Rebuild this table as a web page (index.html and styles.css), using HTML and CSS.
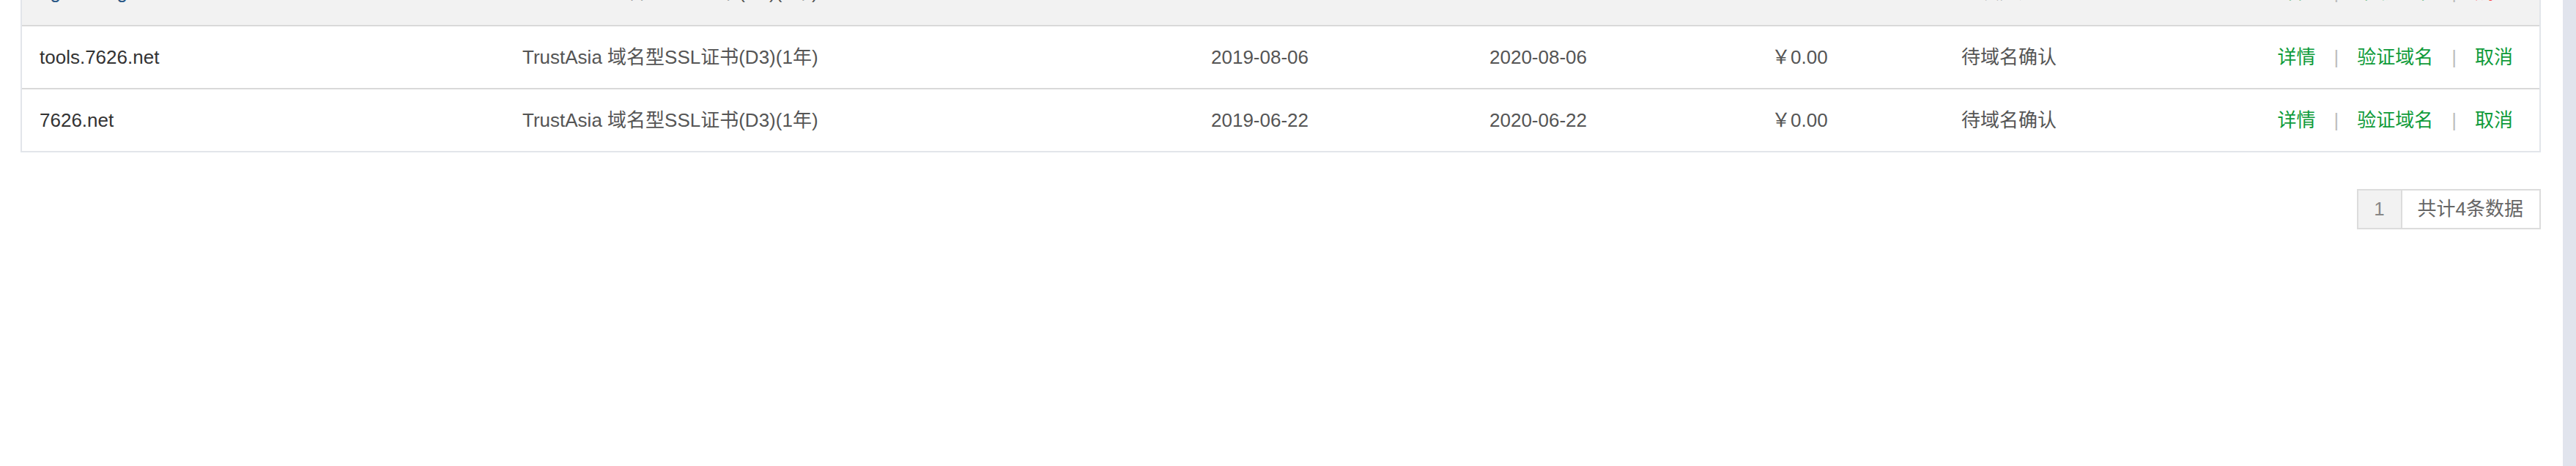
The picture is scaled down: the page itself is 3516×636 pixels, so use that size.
FILE: index.html
```html
<!DOCTYPE html>
<html lang="zh-CN">
<head>
<meta charset="utf-8">
<title>SSL证书列表</title>
<link rel="stylesheet" href="styles.css">
</head>
<body>
<div class="page">
  <main class="main">
    <div class="table">
      <div class="row row-hover">
        <div class="cell cell-domain link">ug.bestbig.7626.net</div>
        <div class="cell">TrustAsia 域名型SSL证书(D3)(1年)</div>
        <div class="cell">2019-08-12</div>
        <div class="cell">2020-08-12</div>
        <div class="cell">￥0.00</div>
        <div class="cell">签发完成</div>
        <div class="cell cell-actions">
          <a class="act">详情</a><span class="sep">|</span><a class="act">下载证书</a><span class="sep">|</span><a class="act act-del">删除</a>
        </div>
      </div>
      <div class="row">
        <div class="cell cell-domain">tools.7626.net</div>
        <div class="cell">TrustAsia 域名型SSL证书(D3)(1年)</div>
        <div class="cell">2019-08-06</div>
        <div class="cell">2020-08-06</div>
        <div class="cell">￥0.00</div>
        <div class="cell">待域名确认</div>
        <div class="cell cell-actions">
          <a class="act">详情</a><span class="sep">|</span><a class="act">验证域名</a><span class="sep">|</span><a class="act">取消</a>
        </div>
      </div>
      <div class="row row-last">
        <div class="cell cell-domain">7626.net</div>
        <div class="cell">TrustAsia 域名型SSL证书(D3)(1年)</div>
        <div class="cell">2019-06-22</div>
        <div class="cell">2020-06-22</div>
        <div class="cell">￥0.00</div>
        <div class="cell">待域名确认</div>
        <div class="cell cell-actions">
          <a class="act">详情</a><span class="sep">|</span><a class="act">验证域名</a><span class="sep">|</span><a class="act">取消</a>
        </div>
      </div>
    </div>
    <div class="pager-wrap">
      <ul class="pager">
        <li class="pg-num">1</li>
        <li class="pg-info">共计4条数据</li>
      </ul>
    </div>
  </main>
  <aside class="strip"></aside>
</div>
</body>
</html>
```

FILE: styles.css
```css
html, body {
  margin: 0;
  padding: 0;
  background: #ffffff;
  overflow: hidden;
}
body {
  font-family: "Liberation Sans", "Noto Sans CJK SC", sans-serif;
  font-size: 26px;
  color: #555;
}
.page {
  display: flex;
  width: 3516px;
  height: 636px;
}
.main {
  flex: 1;
  padding: 0 30px 0 28px;
}
.strip {
  width: 18px;
  background: #e1e4ed;
}
.table {
  margin-top: -55px;
  border: 2px solid #e2e5ea;
  background: #fff;
}
.row {
  display: grid;
  grid-template-columns: 659px 940px 380px 385px 259px 300px 1fr;
  height: 84px;
  border-bottom: 2px solid #d9d9d9;
}
.row-last {
  border-bottom: none;
}
.row-hover {
  height: 87px;
  background: #f2f2f2;
}
.cell {
  padding-left: 24px;
  height: 84px;
  line-height: 84px;
  white-space: nowrap;
  color: #555;
}
.cell-domain {
  color: #333;
}
.cell-domain.link {
  color: #2a5886;
}
.cell-actions {
  display: flex;
  justify-content: flex-end;
  padding-right: 36px;
}
.act {
  color: #0f9b3a;
  cursor: pointer;
}
.act-del {
  color: #ff1a1a;
}
.sep {
  color: #bdbdbd;
  padding: 0 25px;
}
.pager-wrap {
  display: flex;
  justify-content: flex-end;
  margin-top: 50px;
}
.pager {
  display: flex;
  list-style: none;
  margin: 0;
  padding: 0;
  border: 2px solid #dcdcdc;
  height: 51px;
  line-height: 51px;
}
.pg-num {
  width: 58px;
  text-align: center;
  background: #f2f2f2;
  color: #888;
  border-right: 2px solid #dcdcdc;
}
.pg-info {
  padding: 0 22px 0 21px;
  color: #666;
}
```
